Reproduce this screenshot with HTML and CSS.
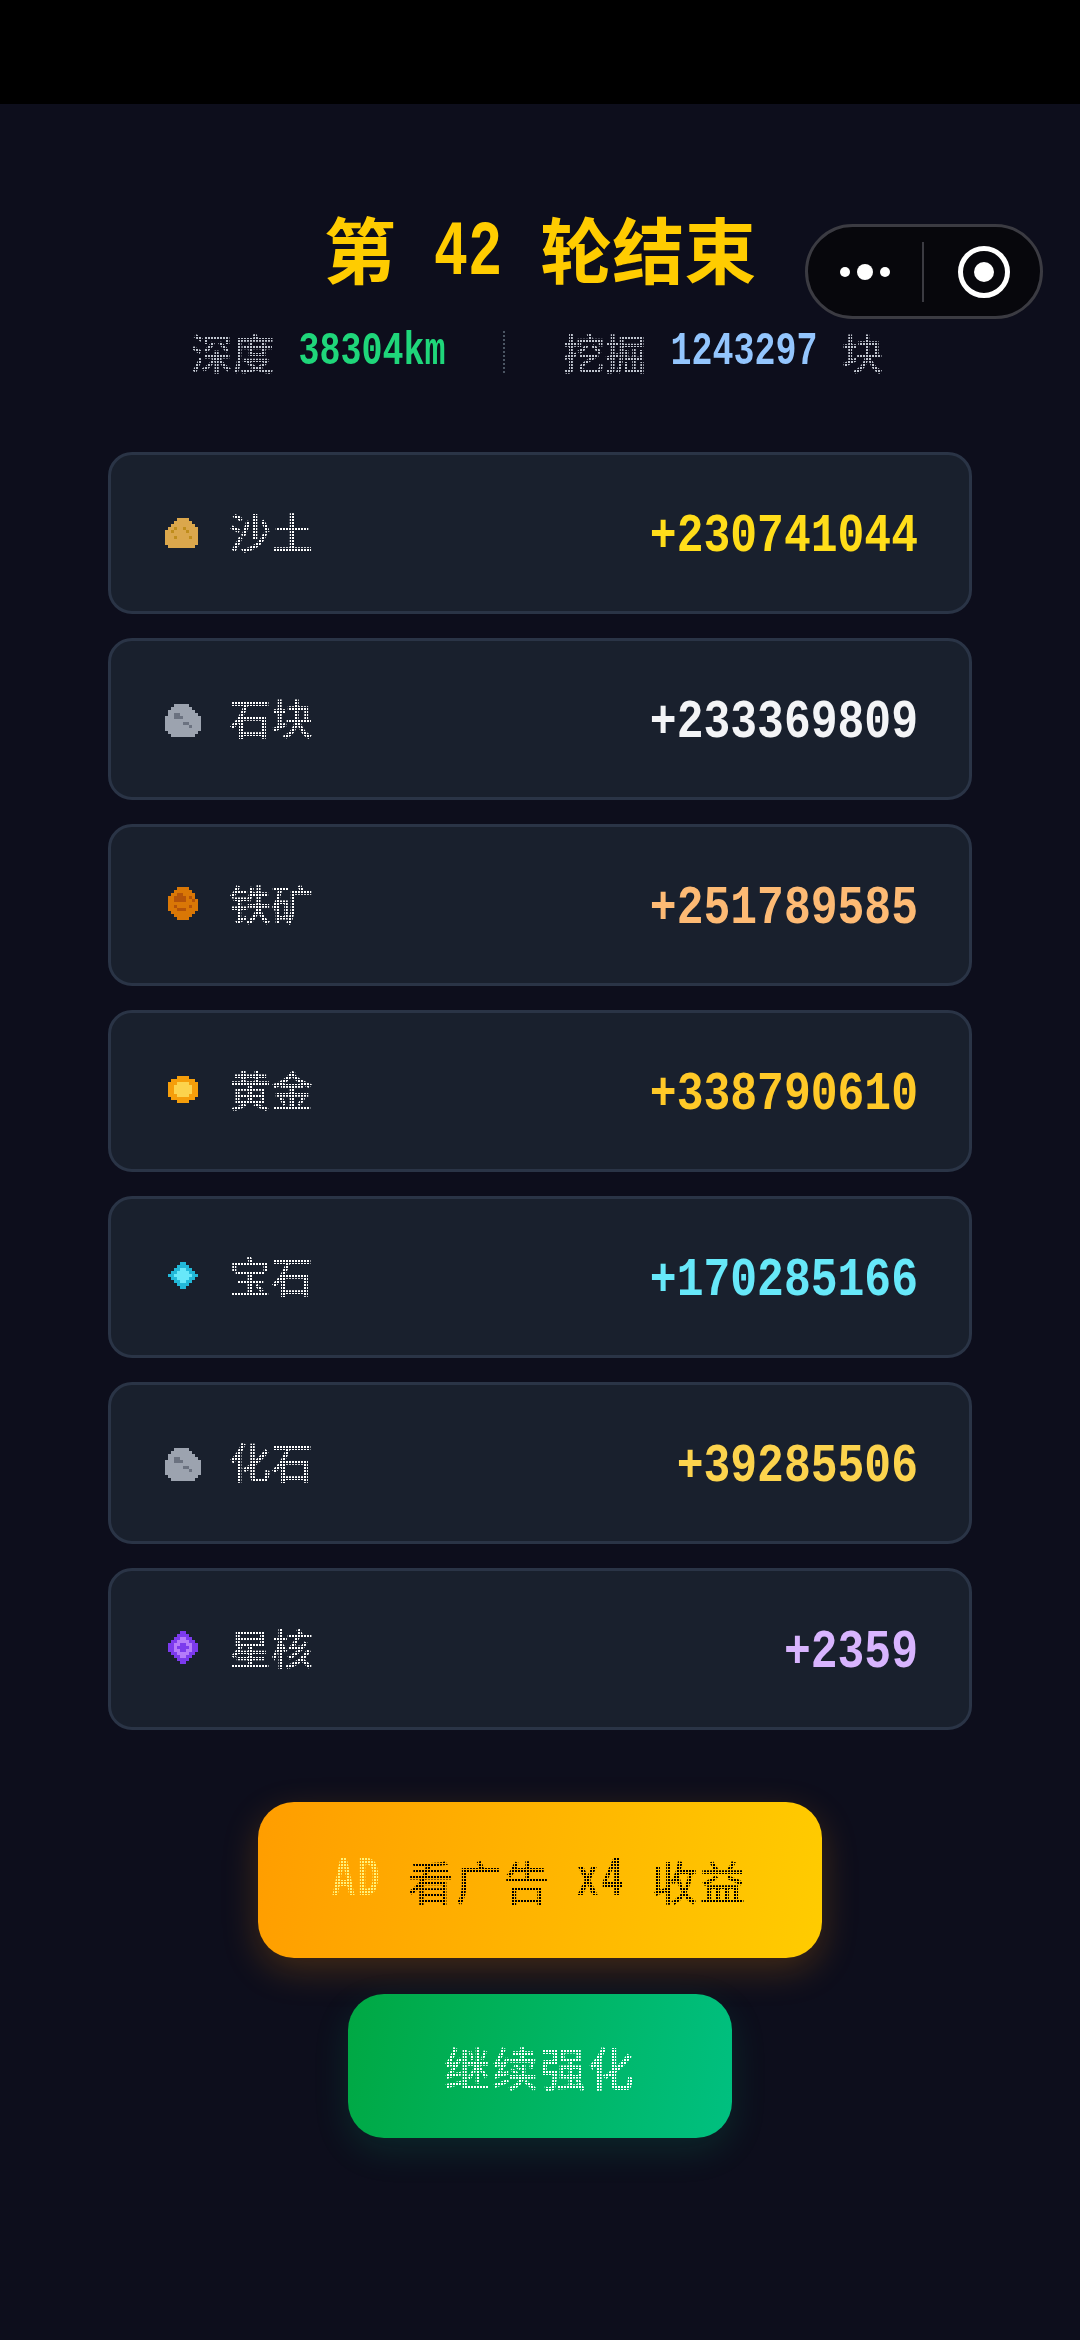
FILE: index.html
```html
<!DOCTYPE html>
<html lang="zh-CN">
<head>
  <meta charset="utf-8">
  <title>第 42 轮结束</title>
  <link rel="stylesheet" href="styles.css">
</head>
<body>
  <div class="status-bar"></div>

  <!-- capsule menu -->
  <div class="capsule">
    <div class="capsule-dots"><i></i><i class="big"></i><i></i></div>
    <div class="capsule-line"></div>
    <div class="capsule-rec"><i></i></div>
  </div>

  <div class="page">
    <h1 class="title"><span>第</span><span class="num">42</span><span>轮结束</span></h1>

    <div class="stats">
      <span class="stat-label dots">深度</span>
      <span class="num stat-depth">38304km</span>
      <span class="stat-line"></span>
      <span class="stat-label dots">挖掘</span>
      <span class="num stat-mined">1243297</span>
      <span class="stat-label dots">块</span>
    </div>

    <div class="list">
      <div class="row">
        <svg class="icon" viewBox="0 0 16 16" shape-rendering="crispEdges">
          <path fill="#dba74c" d="M6 3h4v1H6zM5 4h6v1H5zM4 5h8v1H4zM3 6h10v1H3zM2 7h11v5H2zM3 12h9v1H3z"/>
          <path fill="#c08d1c" d="M5 6h1v1H5zM4 7h1v1H4zM8 6h1v1H8zM9 7h1v1H9zM5 9h1v1H5zM10 9h1v1h-1z"/>
        </svg>
        <span class="name dots">沙土</span>
        <span class="amount sand">+230741044</span>
      </div>
      <div class="row">
        <svg class="icon" viewBox="0 0 16 16" shape-rendering="crispEdges">
          <path fill="#9ca3af" d="M5 3h5v1H5zM4 4h7v1H4zM3 5h9v1H3zM3 6h10v1H3zM2 7h12v5H2zM3 12h10v1H3zM4 13h8v1H4z"/>
          <path fill="#6b7280" d="M5 6h2v2H5zM7 7h1v1H7zM8 9h2v1H8zM10 10h1v1h-1z"/>
        </svg>
        <span class="name dots">石块</span>
        <span class="amount stone">+233369809</span>
      </div>
      <div class="row">
        <svg class="icon" viewBox="0 0 16 16" shape-rendering="crispEdges">
          <path fill="#d97706" d="M6 2h4v1H6zM5 3h6v1H5zM4 4h8v1H4zM3 5h9v1H3zM3 6h10v4H3zM4 10h8v1H4zM5 11h6v1H5zM6 12h4v1H6z"/>
          <path fill="#b45309" d="M6 4h2v1H6zM5 5h4v2H5zM10 5h1v1h-1zM11 6h1v1h-1zM5 8h1v1H5zM10 8h1v1h-1zM6 9h3v1H6z"/>
        </svg>
        <span class="name dots">铁矿</span>
        <span class="amount iron">+251789585</span>
      </div>
      <div class="row">
        <svg class="icon" viewBox="0 0 16 16" shape-rendering="crispEdges">
          <path fill="#f59e0b" d="M6 3h4v1H6zM4 4h8v1H4zM3 5h10v5H3zM4 10h8v1H4zM6 11h4v1H6z"/>
          <path fill="#fcd34d" d="M6 5h4v1H6zM5 6h6v3H5zM6 9h4v1H6z"/>
        </svg>
        <span class="name dots">黄金</span>
        <span class="amount gold">+338790610</span>
      </div>
      <div class="row">
        <svg class="icon" viewBox="0 0 16 16" shape-rendering="crispEdges">
          <path fill="#22b8d8" d="M7 3h2v1H7zM6 4h4v1H6zM5 5h6v1H5zM4 6h8v1H4zM3 7h10v1H3zM4 8h8v1H4zM5 9h6v1H5zM6 10h4v1H6zM7 11h2v1H7z"/>
          <path fill="#67e8f9" d="M7 5h2v1H7zM6 6h4v1H6zM5 7h6v1H5zM6 8h4v1H6zM7 9h2v1H7z"/>
        </svg>
        <span class="name dots">宝石</span>
        <span class="amount gem">+170285166</span>
      </div>
      <div class="row">
        <svg class="icon" viewBox="0 0 16 16" shape-rendering="crispEdges">
          <path fill="#9ca3af" d="M5 3h5v1H5zM4 4h7v1H4zM3 5h9v1H3zM3 6h10v1H3zM2 7h12v5H2zM3 12h10v1H3zM4 13h8v1H4z"/>
          <path fill="#6b7280" d="M5 6h2v2H5zM7 7h1v1H7zM8 9h2v1H8zM10 10h1v1h-1z"/>
        </svg>
        <span class="name dots">化石</span>
        <span class="amount fossil">+39285506</span>
      </div>
      <div class="row">
        <svg class="icon" viewBox="0 0 16 16" shape-rendering="crispEdges">
          <path fill="#7c3aed" d="M7 2h2v1H7zM6 3h4v1H6zM5 4h6v1H5zM4 5h8v1H4zM3 6h10v3H3zM4 9h8v1H4zM5 10h6v1H5zM6 11h4v1H6zM7 12h2v1H7z"/>
          <path fill="#b57bfa" d="M7 4h2v1H7zM6 5h4v1H6zM5 6h6v3H5zM6 9h4v1H6zM7 10h2v1H7z"/>
          <path fill="#7c3aed" d="M7 6h2v1H7zM6 7h4v1H6zM7 8h2v1H7z"/>
        </svg>
        <span class="name dots">星核</span>
        <span class="amount core">+2359</span>
      </div>
    </div>

    <div class="actions">
      <button class="btn btn-ad">
        <span class="btn-text dots"><span class="latin ad-tag">AD</span><span>看广告</span><span class="latin">x4</span><span>收益</span></span>
      </button>
      <button class="btn btn-go">
        <span class="btn-text dots">继续强化</span>
      </button>
    </div>
  </div>
</body>
</html>
```

FILE: styles.css
```css
body {
  margin: 0;
  height: 2340px;
  background: #0d0e1c;
  font-family: "Noto Sans CJK SC", "Noto Sans", sans-serif;
  overflow: hidden;
}

.status-bar {
  height: 104px;
  background: #000;
}

.capsule {
  position: absolute;
  top: 224px;
  left: 805px;
  width: 238px;
  height: 95px;
  box-sizing: border-box;
  display: flex;
  align-items: center;
  background: #07070c;
  border: 3px solid #3b3b42;
  border-radius: 48px;
}

.capsule-dots {
  width: 114px;
  display: flex;
  justify-content: center;
  align-items: center;
  gap: 7px;
}

.capsule-dots i {
  width: 10px;
  height: 10px;
  border-radius: 50%;
  background: #fff;
}

.capsule-dots i.big {
  width: 16px;
  height: 16px;
}

.capsule-line {
  width: 2px;
  height: 60px;
  background: #3b3b42;
}

.capsule-rec {
  width: 52px;
  height: 52px;
  box-sizing: border-box;
  margin-left: 34px;
  display: flex;
  justify-content: center;
  align-items: center;
  border: 5px solid #fff;
  border-radius: 50%;
}

.capsule-rec i {
  width: 20px;
  height: 20px;
  border-radius: 50%;
  background: #fff;
}

.page {
  padding: 0 108px;
}

/* pixel look: each glyph is cut into 2px dots on a 3px grid */
.dots {
  -webkit-mask-image: conic-gradient(at 2px 2px, transparent 270deg, #000 0);
  mask-image: conic-gradient(at 2px 2px, transparent 270deg, #000 0);
  -webkit-mask-size: 3px 3px;
  mask-size: 3px 3px;
}

.num,
.amount,
.latin {
  display: inline-block;
  font-family: "Liberation Mono", monospace;
  font-weight: 700;
  transform: scaleY(1.3);
}

.title {
  height: 80px;
  margin: 0;
  padding-top: 103px;
  display: flex;
  justify-content: center;
  align-items: center;
  gap: 38px;
  font-size: 72px;
  line-height: 80px;
  font-weight: 700;
  color: #ffcc00;
}

.title .num {
  padding-top: 10px;
  font-size: 57px;
  transform: scaleY(1.35);
}

.stats {
  height: 48px;
  margin-top: 41px;
  padding-right: 6px;
  display: flex;
  justify-content: center;
  align-items: center;
  font-size: 42px;
  line-height: 48px;
}

.stat-label {
  color: #c0c5cf;
  font-weight: 500;
}

.stats .num {
  font-size: 35px;
  margin: 0 24px;
}

.stat-depth {
  color: #1fd67a;
}

.stat-mined {
  color: #93c5fd;
}

.stat-line {
  height: 42px;
  margin: 0 57px 0 34px;
  border-left: 2px dotted #4b5563;
}

.list {
  margin-top: 76px;
  display: flex;
  flex-direction: column;
  gap: 24px;
}

.row {
  height: 162px;
  box-sizing: border-box;
  padding: 0 51px 0 48px;
  display: flex;
  align-items: center;
  background: #19202d;
  border: 3px solid #2a3446;
  border-radius: 24px;
}

.icon {
  width: 48px;
  height: 48px;
  flex-shrink: 0;
}

.name {
  margin-left: 22px;
  padding-bottom: 4px;
  font-size: 42px;
  font-weight: 500;
  line-height: 48px;
  color: #fff;
}

.amount {
  margin-left: auto;
  padding-top: 6px;
  font-size: 44.7px;
  line-height: 48px;
  transform: scaleY(1.22);
}

.sand { color: #ffdd1a; }
.stone { color: #f3f4f6; }
.iron { color: #fdba74; }
.gold { color: #ffc928; }
.gem { color: #67e8f9; }
.fossil { color: #fcd34d; }
.core { color: #d8b4fe; }

.actions {
  margin-top: 72px;
  display: flex;
  flex-direction: column;
  align-items: center;
  gap: 36px;
}

.btn {
  display: block;
  padding: 0;
  border: none;
  font-family: inherit;
}

.btn-ad {
  width: 564px;
  height: 156px;
  border-radius: 36px;
  background: linear-gradient(100deg, #ff9d00, #ffcc00);
  box-shadow: 0 12px 36px rgba(255, 140, 0, 0.22);
  color: #000;
}

.btn-go {
  width: 384px;
  height: 144px;
  border-radius: 36px;
  background: linear-gradient(100deg, #00a843, #00c080);
  box-shadow: 0 12px 36px rgba(0, 192, 128, 0.14);
  color: #fff;
}

.btn-text {
  display: inline-flex;
  justify-content: center;
  gap: 25px;
  font-size: 46px;
  font-weight: 500;
  line-height: 56px;
  letter-spacing: 2px;
}

.latin {
  font-size: 36.7px;
  letter-spacing: 3px;
  transform: scaleY(1.5);
}

.ad-tag {
  color: #fff27a;
}
```
